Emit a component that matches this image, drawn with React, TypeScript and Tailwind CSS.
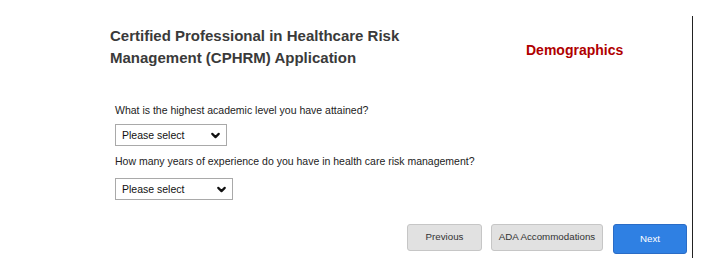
import { ChevronDown } from "lucide-react";

const SelectBox = ({ width }: { width: string }) => {
  return (
    <div
      className={`${width} h-[22px] flex items-center justify-between border border-[#a9a9a9] bg-white pl-[6px] pr-[4px] text-[10.5px] text-[#111]`}
    >
      <span>Please select</span>
      <ChevronDown className="size-[13px]" strokeWidth={4} />
    </div>
  );
};

export default function App() {
  return (
    <div className="w-[712px] h-[267px] bg-white font-['Liberation_Sans',Arial,sans-serif] overflow-hidden">
      <div className="mt-[16px] w-[693px] h-[242px] border-r border-[#222] pl-[110px] pt-[9px] pr-[5px] flex flex-col">
        {/* Header */}
        <div className="flex">
          <h1 className="w-[416px] text-[15px] font-bold leading-[22px] text-[#3a3a3a]">
            <span className="block w-[300px]">
              Certified Professional in Healthcare Risk Management (CPHRM) Application
            </span>
          </h1>
          <div className="mt-[17px] text-[14px] font-bold leading-[16px] text-[#b00000]">
            Demographics
          </div>
        </div>

        {/* Questions */}
        <div className="mt-[34px] pl-[5px] flex flex-col text-[10.5px] leading-[14px] text-[#222]">
          <label>What is the highest academic level you have attained?</label>
          <div className="mt-[7px]">
            <SelectBox width="w-[112px]" />
          </div>
          <label className="mt-[8px]">
            How many years of experience do you have in health care risk management?
          </label>
          <div className="mt-[10px]">
            <SelectBox width="w-[118px]" />
          </div>
        </div>

        {/* Buttons */}
        <div className="mt-auto mb-[4px] flex items-start justify-end gap-[9px] text-[9.75px]">
          <button className="w-[75px] h-[27px] rounded-[3px] border border-[#c6c6c6] bg-[#e1e1e1] text-[#333]">
            Previous
          </button>
          <button className="w-[112px] h-[27px] rounded-[3px] border border-[#c6c6c6] bg-[#e1e1e1] text-[#333]">
            ADA Accommodations
          </button>
          <button className="ml-[1px] w-[74px] h-[30px] rounded-[3px] border border-[#2a6cc6] bg-[#2f80e3] text-white">
            Next
          </button>
        </div>
      </div>
    </div>
  );
}
